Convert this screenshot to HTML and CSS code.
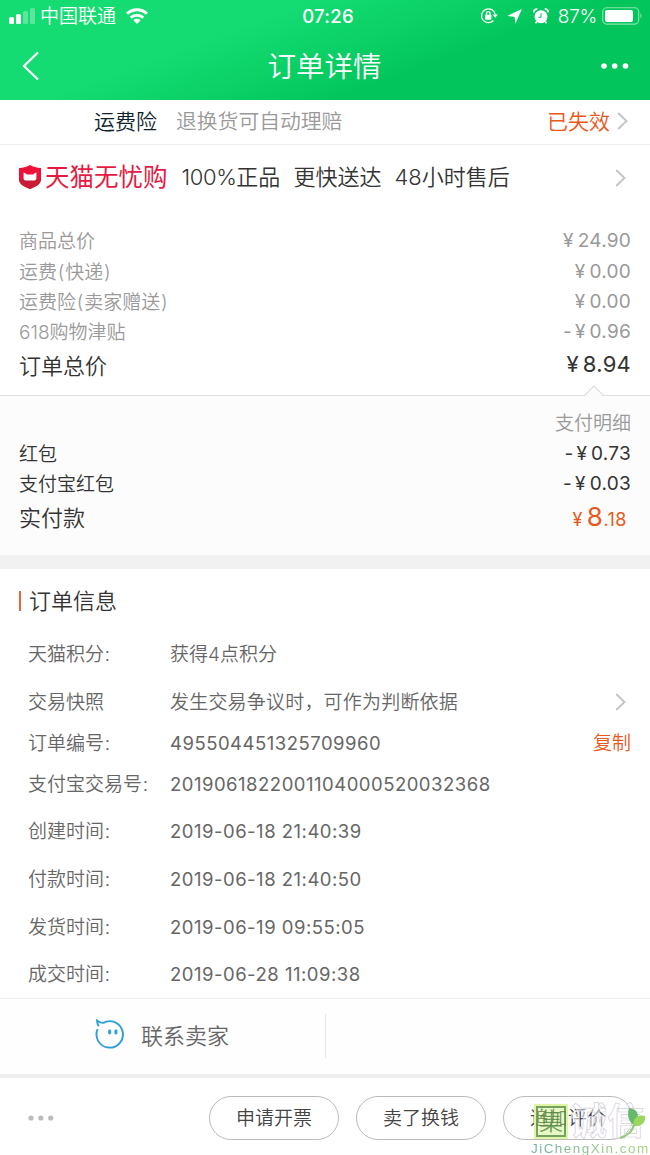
FILE: index.html
```html
<!DOCTYPE html>
<html lang="zh-CN">
<head>
<meta charset="utf-8">
<title>订单详情</title>
<link rel="stylesheet" href="styles.css">
</head>
<body>
<div class="page">
  <header class="header">
    <div class="status">
      <div class="status-left">
        <svg class="signal" width="27" height="16" viewBox="0 0 27 16"><rect x="0" y="9" width="5" height="7" rx="1.5" fill="#fff"/><rect x="7" y="6" width="5" height="10" rx="1.5" fill="#fff"/><rect x="14" y="3" width="5" height="13" rx="1.5" fill="#fff" opacity=".3"/><rect x="21" y="0" width="5" height="16" rx="1.5" fill="#fff" opacity=".3"/></svg>
        <span class="carrier">中国联通</span>
        <svg class="wifi" width="22" height="16" viewBox="0 0 22 16"><g fill="none" stroke="#fff" stroke-width="3"><path d="M1 5.6C6.8.3 15.2.3 21 5.6"/><path d="M4.7 9.6c3.7-3.3 8.9-3.3 12.6 0"/></g><path d="M7.4 12.2c2.1-1.9 5.1-1.9 7.2 0L11 16z" fill="#fff"/></svg>
      </div>
      <span class="clock">07:26</span>
      <div class="status-right">
        <svg width="18" height="18" viewBox="0 0 18 18"><path d="M13.4 13.5A6.9 6.900 0 1 1 15.200 7.500" fill="none" stroke="#fff" stroke-width="1.300"/><path d="M12.600 7.400h5.200l-2.600 3.400z" fill="#fff"/><rect x="5.200" y="7.700" width="6.200" height="5" rx=".8" fill="#fff"/><path d="M6.500 8V6.500a1.800 1.800 0 0 1 3.600 0V8" fill="none" stroke="#fff" stroke-width="1.300"/></svg>
        <svg width="15" height="15" viewBox="0 0 15 15"><path d="M14.900 0 8.400 14.800 7.600 7.900.2 7z" fill="#fff"/></svg>
        <svg width="16" height="16" viewBox="0 0 16 16"><circle cx="8" cy="8.700" r="6.500" fill="#fff"/><path d="M.9 4.300a2.800 2.800 0 0 1 3.400-3.100M15.100 4.300a2.800 2.800 0 0 0-3.400-3.100M3.800 13.600l-1.400 1.700M12.200 13.600l1.400 1.700" fill="none" stroke="#fff" stroke-width="1.800"/><path d="M8 5.200v4H5.200" fill="none" stroke="#08c75f" stroke-width="1.100"/></svg>
        <span class="percent">87%</span>
        <svg class="battery" width="41" height="18" viewBox="0 0 41 18"><rect x=".7" y=".7" width="36" height="16.4" rx="4" fill="none" stroke="#fff" stroke-width="1.1" opacity=".55"/><rect x="3" y="3" width="28" height="12" rx="2" fill="#fff"/><path d="M38.500 6q2 2.800 0 5.600z" fill="#fff" opacity=".6"/></svg>
      </div>
    </div>
    <nav class="nav">
      <svg class="back" width="18" height="30" viewBox="0 0 18 30"><path d="M16 1.500 2 15l14 13.500" fill="none" stroke="#fff" stroke-width="2.200"/></svg>
      <h1 class="nav-title">订单详情</h1>
      <svg class="more" width="28" height="6" viewBox="0 0 28 6"><g fill="#fff"><circle cx="3" cy="3" r="2.800"/><circle cx="13.700" cy="3" r="2.800"/><circle cx="24.500" cy="3" r="2.800"/></g></svg>
    </nav>
  </header>

  <section class="insurance">
    <span class="insurance-name">运费险</span>
    <span class="insurance-desc">退换货可自动理赔</span>
    <span class="insurance-state">已失效</span>
    <svg class="chevron" width="11" height="18" viewBox="0 0 11 18"><path d="m1.200 1 8.300 8-8.300 8" fill="none" stroke="#c4c4c4" stroke-width="1.900"/></svg>
  </section>

  <section class="tmall">
    <svg class="shield" width="22" height="24" viewBox="0 0 22 24"><path d="M11 0c3 2 6.500 2.700 11 2.900V14c0 5-4.500 7.500-11 10C4.500 21.500 0 19 0 14V2.900C4.500 2.700 8 2 11 0z" fill="#ef1238"/><path d="M0 14h22c0 5-4.500 7.500-11 10C4.500 21.500 0 19 0 14z" fill="#c91b35"/><path d="M4.600 7.500c1.200.2 2.200 1 3.200 1.900h6.400c1-.9 2-1.700 3.200-1.900v5.700c0 1.500-.8 2.200-2.200 2.200H6.800c-1.400 0-2.200-.7-2.200-2.200z" fill="#fff"/></svg>
    <span class="brand">天猫无忧购</span>
    <span class="perks"><span class="perk"><b>100%</b>正品</span><span class="perk">更快送达</span><span class="perk">48小时售后</span></span>
    <svg class="chevron" width="11" height="18" viewBox="0 0 11 18"><path d="m1.200 1 8.300 8-8.300 8" fill="none" stroke="#c4c4c4" stroke-width="1.900"/></svg>
  </section>

  <section class="prices">
    <div class="price-row"><span>商品总价</span><span class="amount"><i>¥</i>24.90</span></div>
    <div class="price-row"><span>运费<em>(</em>快递<em>)</em></span><span class="amount"><i>¥</i>0.00</span></div>
    <div class="price-row"><span>运费险<em>(</em>卖家赠送<em>)</em></span><span class="amount"><i>¥</i>0.00</span></div>
    <div class="price-row"><span>618购物津贴</span><span class="amount">-<i>¥</i>0.96</span></div>
    <div class="price-row total"><span>订单总价</span><span class="amount"><i>¥</i>8.94</span></div>
  </section>

  <section class="payment">
    <svg class="notch" width="22" height="12" viewBox="0 0 22 12"><path d="M0 12 11 1l11 11z" fill="#fcfcfc"/><path d="m1 11 10-10 10 10" fill="none" stroke="#ddd" stroke-width="1.200"/></svg>
    <div class="price-row detail"><span>支付明细</span></div>
    <div class="price-row dark"><span>红包</span><span class="amount">-<i>¥</i>0.73</span></div>
    <div class="price-row dark"><span>支付宝红包</span><span class="amount">-<i>¥</i>0.03</span></div>
    <div class="price-row paid"><span>实付款</span><span class="final"><i>¥</i><b>8</b>.18</span></div>
  </section>

  <section class="info">
    <h2 class="info-title"><span>订单信息</span></h2>
    <div class="groups">
      <div class="info-row"><span class="label">天猫积分<em>:</em></span><span>获得4点积分</span></div>
      <div class="group">
        <div class="info-row"><span class="label">交易快照</span><span class="tip">发生交易争议时，可作为判断依据</span><svg class="chevron" width="11" height="18" viewBox="0 0 11 18"><path d="m1.200 1 8.300 8-8.300 8" fill="none" stroke="#c4c4c4" stroke-width="1.900"/></svg></div>
        <div class="info-row"><span class="label">订单编号<em>:</em></span><span class="num">495504451325709960</span><a class="copy">复制</a></div>
        <div class="info-row"><span class="label">支付宝交易号<em>:</em></span><span class="num">2019061822001104000520032368</span></div>
      </div>
      <div class="info-row"><span class="label">创建时间<em>:</em></span><span class="num">2019-06-18 21:40:39</span></div>
      <div class="info-row"><span class="label">付款时间<em>:</em></span><span class="num">2019-06-18 21:40:50</span></div>
      <div class="info-row"><span class="label">发货时间<em>:</em></span><span class="num">2019-06-19 09:55:05</span></div>
      <div class="info-row"><span class="label">成交时间<em>:</em></span><span class="num">2019-06-28 11:09:38</span></div>
    </div>
  </section>

  <section class="contact">
    <div class="seller">
      <svg width="30" height="31" viewBox="0 0 30 31"><path d="M2.600 10.200A13.200 13.200 0 1 0 8.300 3.900C6 4 4 3 2 1.500c.1 2.400.8 4.100 1.700 5.800" fill="none" stroke="#2f9fd8" stroke-width="1.900"/><rect x="13.200" y="10.500" width="3" height="5" rx="1.400" fill="#2f9fd8"/><rect x="19.400" y="10.500" width="3" height="5" rx="1.400" fill="#2f9fd8"/></svg>
      <span>联系卖家</span>
    </div>
  </section>

  <footer class="actions">
    <svg class="dots" width="26" height="6" viewBox="0 0 26 6"><g fill="#bbb"><circle cx="3" cy="3" r="2.600"/><circle cx="12.800" cy="3" r="2.600"/><circle cx="22.700" cy="3" r="2.600"/></g></svg>
    <button class="pill">申请开票</button>
    <button class="pill">卖了换钱</button>
    <button class="pill">追加评价</button>
  </footer>

  <div class="watermark">
    <div class="mark-row"><span class="seal">集</span><span class="mark-name">诚信</span></div>
    <svg class="leaf" width="28" height="32" viewBox="0 0 28 32"><path d="M9 1C18 2 21 9 14 18 8 14 7 8 9 1z" fill="#65b96b"/><path d="M13 19c0-8 5-12 12-10 1 7-4 11-12 10z" fill="#9bd75f"/><path d="M14 17C13 24 7 29 0 31" fill="none" stroke="#8fcb72" stroke-width="2"/></svg>
    <div class="domain">JiChengXin.com</div>
  </div>
</div>
</body>
</html>
```
FILE: styles.css
```css
* { box-sizing: border-box; }
body {
  margin: 0;
  background: #fff;
  font-family: Inter, "Noto Sans CJK SC", sans-serif;
  font-size: 19px;
  font-weight: 350;
  color: #666;
}
svg { display: block; flex: none; }
i, b, em { font-style: normal; font-weight: inherit; }
em { margin: 0 .8px; }
span, a { white-space: nowrap; }
.page { position: relative; width: 650px; height: 1155px; overflow: hidden; }

.header {
  height: 100px;
  color: #fff;
  background: linear-gradient(160deg, #14dc72 0%, #14dc72 34%, #02c65b 66%, #02c65b 100%);
}
.status { display: grid; grid-template-columns: 1fr auto 1fr; align-items: center; height: 32px; padding: 0 9px; }
.status-left, .status-right { display: flex; align-items: center; }
.status-right { justify-content: flex-end; }
.carrier { margin-left: 4px; line-height: 24px; padding-top: 2px; }
.wifi { margin-left: 10px; }
.clock { font-size: 18.5px; font-weight: 500; letter-spacing: .3px; padding-left: 6px; }
.status-right svg:nth-of-type(2) { margin-left: 9px; }
.status-right svg:nth-of-type(3) { margin-left: 11px; }
.percent { margin-left: 9px; font-size: 19px; letter-spacing: -.3px; }
.battery { margin-left: 5px; margin-right: -2px; }
.nav { display: grid; grid-template-columns: 1fr auto 1fr; align-items: center; height: 68px; padding: 0 21px 0 22px; }
.nav-title { margin: 0 2px 0 0; font-size: 28.5px; font-weight: 350; line-height: 40px; padding-top: 1px; }
.more { justify-self: end; }

.insurance { display: flex; align-items: center; height: 45px; padding: 0 22px 2px 94px; font-size: 21px; border-bottom: 1px solid #eee; }
.insurance span { padding-bottom: 3px; }
.insurance-name { color: #0d1f2d; }
.insurance-desc { margin-left: 19px; font-size: 20.8px; color: #999; }
.insurance-state { margin-left: auto; margin-right: 7px; color: #e9581b; }

.tmall { display: flex; align-items: center; height: 65px; padding: 0 24px 0 19px; }
.tmall .shield { margin-bottom: 2px; }
.brand { margin-left: 4px; padding-bottom: 4px; font-size: 24.5px; font-weight: 400; color: #e51a43; }
.perks { display: flex; gap: 13px; margin-left: 14px; padding-bottom: 5px; font-size: 22px; color: #333; }
.perk b { letter-spacing: -.4px; }
.tmall .chevron { margin-left: auto; }

.prices { height: 185px; padding: 17px 19px 0; color: #999; }
.price-row { display: flex; justify-content: space-between; align-items: center; height: 30.4px; line-height: 28px; }
.amount { display: flex; padding-bottom: 2px; font-size: 19px; font-weight: 400; letter-spacing: .25px; }
.amount i { margin: 0 4px 0 3px; }
.total { height: 34px; font-size: 22px; color: #333; }
.total .amount { padding-bottom: 4px; font-size: 22px; }

.payment { position: relative; height: 160px; padding: 13px 19px 0; background: #fcfcfc; border-top: 1px solid #ddd; }
.notch { position: absolute; top: -11px; left: 583px; }
.detail { justify-content: flex-end; color: #999; }
.dark, .paid { color: #333; }
.paid { height: 36px; font-size: 22px; }
.final { display: flex; align-items: baseline; margin-right: 4px; font-size: 18px; letter-spacing: .5px; color: #e9581b; font-weight: 400; }
.final i { margin-right: 4px; }
.final b { font-size: 26px; }

.info { height: 443px; border-top: 14px solid #f1f1f1; }
.info-title { display: flex; align-items: center; gap: 8px; height: 64px; margin: 0; padding-left: 19px; font-size: 22px; font-weight: 350; color: #333; }
.info-title span { padding-bottom: 4px; }
.info-title::before { content: ""; width: 2px; height: 20px; background: #e9683b; }
.groups { display: flex; flex-direction: column; gap: 19.7px; padding: 8px 19px 0 28px; }
.group { display: flex; flex-direction: column; gap: 13px; }
.info-row { display: flex; align-items: center; height: 28px; line-height: 28px; }
.label { width: 142px; }
.tip { letter-spacing: .2px; }
.info-row .chevron { margin-left: auto; margin-right: 5px; margin-bottom: 2px; }
.num { padding-bottom: 2px; font-size: 18.5px; font-weight: 400; letter-spacing: .5px; }
.copy { margin-left: auto; color: #e9581b; }

.contact { display: flex; height: 80px; background: #fefefe; border-top: 1px solid #eee; border-bottom: 4px solid #eee; }
.seller { display: flex; align-items: center; gap: 16px; width: 326px; height: 44px; margin-top: 15px; padding-left: 95px; font-size: 22px; border-right: 1px solid #e4e4e4; }
.seller svg { margin-bottom: 3px; }
.seller span { padding-bottom: 4px; }

.actions { display: flex; align-items: center; height: 80px; padding: 0 17px 0 28px; }
.dots { margin-right: auto; }
.pill { width: 130px; height: 44px; margin-left: 17px; padding: 0 0 3px; border: 1px solid #bbb; border-radius: 22px; background: #fff; color: #444; font: inherit; }

.watermark { position: absolute; left: 531px; top: 1104px; width: 119px; height: 51px; }
.mark-row { display: flex; align-items: center; height: 35px; }
.seal { display: grid; place-items: center; width: 30px; height: 31px; margin-left: 5px; border: 2px solid rgba(86, 140, 72, .8); outline: 2px solid #dff5a5; background: rgba(205, 242, 126, .45); font-size: 24px; line-height: 26px; color: rgba(86, 137, 72, .85); }
.mark-name { margin-left: 4px; font-size: 37px; line-height: 35px; font-weight: 700; color: rgba(255, 255, 255, .5); -webkit-text-stroke: .7px #d5cddd; }
.leaf { position: absolute; left: 89px; top: 3px; }
.domain { position: absolute; left: 0; top: 36px; font: 13.5px/18px "Liberation Sans", sans-serif; letter-spacing: 1.45px; background: linear-gradient(90deg, #70ad9e, #a9d478); background-clip: text; color: transparent; }
```
